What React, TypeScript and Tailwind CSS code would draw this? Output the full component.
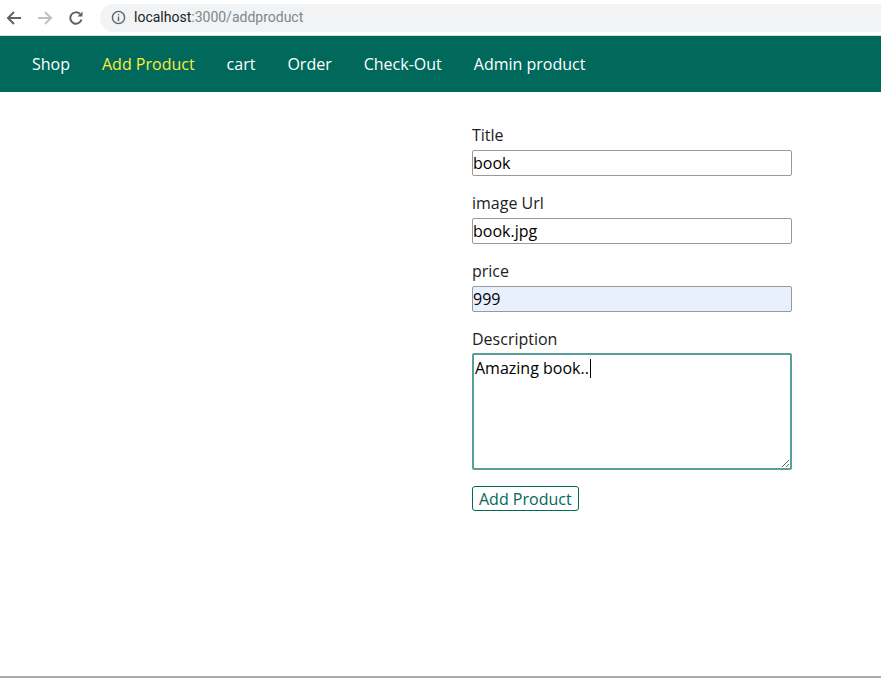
import React from "react";

function ChromeBar() {
  return (
    <div className="h-[36px] bg-white border-b border-[#dadce0] flex items-center" style={{ fontFamily: "Roboto, 'Noto Sans', sans-serif" }}>
      <div className="w-[100px] flex items-center gap-[3px]">
        <div className="w-[28px] h-[30px] flex items-center justify-center">
          <svg width="16" height="16" viewBox="0 0 16 16" fill="none" stroke="#5f6368" strokeWidth="2">
            <path d="M15 8H2M8 2L2 8l6 6" />
          </svg>
        </div>
        <div className="w-[28px] h-[30px] flex items-center justify-center">
          <svg width="16" height="16" viewBox="0 0 16 16" fill="none" stroke="#bdc1c6" strokeWidth="2">
            <path d="M1 8h13M8 2l6 6-6 6" />
          </svg>
        </div>
        <div className="w-[28px] h-[30px] flex items-center justify-center">
          <svg width="16" height="16" viewBox="0 0 16 16" fill="none" stroke="#5f6368" strokeWidth="2">
            <path d="M13.5 9.5A5.7 5.7 0 1 1 12 4" />
            <path d="M14.5 1.5v5h-5z" fill="#5f6368" stroke="none" />
          </svg>
        </div>
      </div>
      <div className="flex-1 h-[28px] bg-[#f1f3f4] rounded-l-full flex items-center pl-[11px]">
        <svg width="15" height="15" viewBox="0 0 16 16" fill="none" stroke="#5f6368" strokeWidth="1.5">
          <circle cx="8" cy="8" r="6.5" />
          <path d="M8 7v5M8 4.2v1.3" />
        </svg>
        <span className="ml-[8px] text-[14px] text-[#202124]">localhost</span>
        <span className="text-[14px] text-[#80868b]">:3000/addproduct</span>
      </div>
    </div>
  );
}

function Nav() {
  const items = ["Shop", "Add Product", "cart", "Order", "Check-Out", "Admin product"];
  return (
    <nav className="h-[56px] bg-[#00695c] flex items-center pl-[32px] gap-[32px]">
      {items.map((it) => (
        <a key={it} className={"text-[16px] " + (it === "Add Product" ? "text-[#ffeb3b]" : "text-white")}>
          {it}
        </a>
      ))}
    </nav>
  );
}

function Field({ label, value, bg }: { label: string; value: string; bg?: string }) {
  return (
    <div className="mb-[15px]">
      <label className="block leading-[24px] mb-[3px]">{label}</label>
      <input
        readOnly
        value={value}
        className={"block w-[320px] h-[26px] border border-[#999] rounded-[2px] px-0 leading-[24px] text-[16px] text-black outline-none " + (bg ?? "bg-white")}
      />
    </div>
  );
}

export default function App() {
  return (
    <div className="w-[881px] h-[678px] bg-white flex flex-col relative" style={{ fontFamily: "'Open Sans', sans-serif" }}>
      <ChromeBar />
      <Nav />
      <main className="flex-1 pl-[472px] pt-[31px] text-[16px] text-[#212121]">
        <Field label="Title" value="book" />
        <Field label="image Url" value="book.jpg" />
        <Field label="price" value="999" bg="bg-[#e8f0fe]" />
        <div>
          <label className="block leading-[24px] mb-[2px]">Description</label>
          <div className="relative w-[320px]">
            <textarea
              readOnly
              value="Amazing book.."
              className="block w-[320px] h-[117px] border-2 border-[#5a9e97] rounded-[2px] px-[1px] py-[1px] leading-[24px] text-[16px] text-black outline-none"
            />
            <span className="absolute left-[118px] top-[6px] w-[1px] h-[19px] bg-black" />
          </div>
        </div>
        <button className="mt-[16px] h-[25px] px-[6px] border border-[#00695c] rounded-[3px] text-[#00695c] text-[16px] leading-[22px] bg-white">
          Add Product
        </button>
      </main>
      <div className="h-[2px] bg-[#ababab]" />
    </div>
  );
}
